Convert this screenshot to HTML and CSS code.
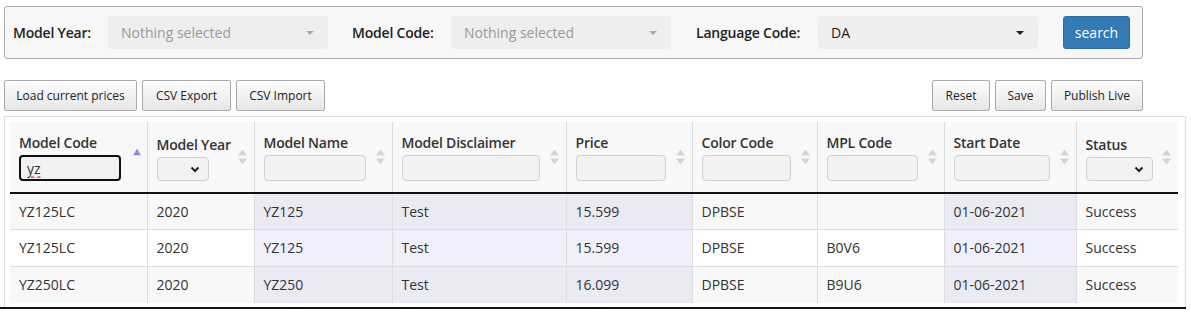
FILE: index.html
```html
<!DOCTYPE html>
<html>
<head>
<meta charset="utf-8">
<link rel="stylesheet" href="styles.css">
</head>
<body>
<div class="panel">
  <label class="lbl lbl-year">Model Year:</label>
  <div class="picker muted"><span>Nothing selected</span><i class="caret"></i></div>
  <label class="lbl lbl-code">Model Code:</label>
  <div class="picker muted"><span>Nothing selected</span><i class="caret"></i></div>
  <label class="lbl lbl-lang">Language Code:</label>
  <div class="picker"><span>DA</span><i class="caret dark"></i></div>
  <button class="btn-search">search</button>
</div>

<div class="toolbar">
  <div class="group">
    <button class="btn b-load">Load current prices</button>
    <button class="btn b-csv">CSV Export</button>
    <button class="btn b-csv">CSV Import</button>
  </div>
  <div class="group">
    <button class="btn b-reset">Reset</button>
    <button class="btn b-save">Save</button>
    <button class="btn b-pub">Publish Live</button>
  </div>
</div>

<div class="grid-wrap">
  <table class="grid">
    <thead>
      <tr>
        <th class="w1"><div class="hl">Model Code</div><input class="fi focus" value="yz"><span class="sort asc"><svg width="8" height="7" viewBox="0 0 8 7"><path d="M4 0L8 7H0Z" fill="#8b8ddc"/></svg></span></th>
        <th class="w2"><div class="hl">Model Year</div><div class="fsel fsel-year"><svg width="10" height="7" viewBox="0 0 10 7"><path d="M1.5 1.5L5 5L8.5 1.5" fill="none" stroke="#222" stroke-width="2"/></svg></div><span class="sort"><svg width="9" height="15" viewBox="0 0 9 15"><path d="M4.5 0L9 6H0Z M4.5 15L9 9H0Z" fill="#d4d4d4"/></svg></span></th>
        <th class="w3"><div class="hl">Model Name</div><input class="fi"><span class="sort"><svg width="9" height="15" viewBox="0 0 9 15"><path d="M4.5 0L9 6H0Z M4.5 15L9 9H0Z" fill="#d4d4d4"/></svg></span></th>
        <th class="w4"><div class="hl">Model Disclaimer</div><input class="fi"><span class="sort"><svg width="9" height="15" viewBox="0 0 9 15"><path d="M4.5 0L9 6H0Z M4.5 15L9 9H0Z" fill="#d4d4d4"/></svg></span></th>
        <th class="w5"><div class="hl">Price</div><input class="fi"><span class="sort"><svg width="9" height="15" viewBox="0 0 9 15"><path d="M4.5 0L9 6H0Z M4.5 15L9 9H0Z" fill="#d4d4d4"/></svg></span></th>
        <th class="w6"><div class="hl">Color Code</div><input class="fi"><span class="sort"><svg width="9" height="15" viewBox="0 0 9 15"><path d="M4.5 0L9 6H0Z M4.5 15L9 9H0Z" fill="#d4d4d4"/></svg></span></th>
        <th class="w7"><div class="hl">MPL Code</div><input class="fi"><span class="sort"><svg width="9" height="15" viewBox="0 0 9 15"><path d="M4.5 0L9 6H0Z M4.5 15L9 9H0Z" fill="#d4d4d4"/></svg></span></th>
        <th class="w8"><div class="hl">Start Date</div><input class="fi"><span class="sort"><svg width="9" height="15" viewBox="0 0 9 15"><path d="M4.5 0L9 6H0Z M4.5 15L9 9H0Z" fill="#d4d4d4"/></svg></span></th>
        <th class="w9"><div class="hl">Status</div><div class="fsel fsel-status"><svg width="10" height="7" viewBox="0 0 10 7"><path d="M1.5 1.5L5 5L8.5 1.5" fill="none" stroke="#222" stroke-width="2"/></svg></div><span class="sort"><svg width="9" height="15" viewBox="0 0 9 15"><path d="M4.5 0L9 6H0Z M4.5 15L9 9H0Z" fill="#d4d4d4"/></svg></span></th>
      </tr>
    </thead>
    <tbody>
      <tr>
        <td>YZ125LC</td><td>2020</td><td class="hi">YZ125</td><td class="hi">Test</td><td class="hi">15.599</td><td>DPBSE</td><td></td><td class="hi">01-06-2021</td><td>Success</td>
      </tr>
      <tr>
        <td>YZ125LC</td><td>2020</td><td class="hi">YZ125</td><td class="hi">Test</td><td class="hi">15.599</td><td>DPBSE</td><td>B0V6</td><td class="hi">01-06-2021</td><td>Success</td>
      </tr>
      <tr>
        <td>YZ250LC</td><td>2020</td><td class="hi">YZ250</td><td class="hi">Test</td><td class="hi">16.099</td><td>DPBSE</td><td>B9U6</td><td class="hi">01-06-2021</td><td>Success</td>
      </tr>
    </tbody>
  </table>
</div>
<div class="foot-line"></div>
</body>
</html>
```

FILE: styles.css
```css
* { box-sizing: border-box; }
html, body { margin: 0; background: #fff; }
body {
  padding: 6px 4px 0 4px;
  font-family: "Open Sans", "Noto Sans", sans-serif;
  font-size: 14px;
  color: #333;
}

.panel {
  width: 1139px;
  height: 53px;
  border: 1px solid #aaa;
  border-radius: 3px;
  background: #f7f7f7;
  display: flex;
  align-items: center;
  padding: 0 0 0 8px;
}
.lbl {
  font-weight: 600;
  font-size: 14px;
  color: #222;
  letter-spacing: -0.2px;
}
.lbl-year { width: 95px; }
.lbl-code { width: 99px; margin-left: 24px; }
.lbl-lang { width: 122px; margin-left: 25px; }
.picker {
  width: 220px;
  height: 33px;
  background: #eee;
  border-radius: 4px;
  display: flex;
  align-items: center;
  justify-content: space-between;
  padding: 0 12px 0 13px;
  font-size: 14px;
  color: #222;
}
.picker.muted { color: #9a9a9a; }
.caret {
  width: 0; height: 0;
  border-left: 4px solid transparent;
  border-right: 4px solid transparent;
  border-top: 4px solid #aaa;
  margin-right: 2px;
}
.caret.dark { border-top-color: #222; }
.btn-search {
  margin-left: 25px;
  width: 67px;
  height: 33px;
  background: #337ab7;
  border: 1px solid #2e6da4;
  border-radius: 3px;
  color: #fff;
  font-family: inherit;
  font-size: 14px;
  padding: 0;
}

.toolbar {
  width: 1139px;
  margin-top: 21px;
  display: flex;
  justify-content: space-between;
}
.group { display: flex; gap: 5px; }
.btn {
  height: 31px;
  padding: 0;
  font-family: inherit;
  font-size: 12px;
  color: #222;
  border: 1px solid #aaa;
  border-radius: 2px;
  background: linear-gradient(#fdfdfd, #e6e6e6);
}
.b-load { width: 133px; }
.b-csv { width: 89px; }
.b-reset { width: 58px; }
.b-save { width: 51px; }
.b-pub { width: 92px; }

.grid-wrap {
  width: 1182px;
  margin-top: 5px;
  border: 1px solid #ddd;
  border-bottom: none;
  padding: 5px 5px 4px 5px;
  background: #fff;
}
.grid {
  width: 1168px;
  table-layout: fixed;
  border-collapse: collapse;
}
.grid th {
  position: relative;
  background: #f8f8f8;
  text-align: left;
  vertical-align: bottom;
  padding: 11px 26px 11px 9px;
  border-left: 1px solid #ddd;
  border-bottom: 2px solid #111;
  font-weight: 600;
  font-size: 14px;
  color: #333;
  letter-spacing: -0.2px;
}
.grid th:first-child { border-left: none; }
.w1 { width: 137px; }
.w2 { width: 107px; }
.w3 { width: 138px; }
.w4 { width: 174px; }
.w5 { width: 126px; }
.w6 { width: 125px; }
.w7 { width: 127px; }
.w8 { width: 132px; }
.w9 { width: 102px; }
.hl { line-height: 19px; margin-bottom: 3px; white-space: nowrap; }
.fi {
  display: block;
  width: 100%;
  height: 26px;
  border: 1px solid #d0d0d0;
  border-radius: 4px;
  background: #f2f2f2;
  font-family: inherit;
  font-size: 14px;
  padding: 0 8px;
  color: #333;
}
.fi.focus {
  border: 2px solid #111;
  text-decoration: underline wavy #e33;
  text-underline-offset: 2px;
  padding: 0 6px;
}
.fsel {
  height: 24px;
  border: 1px solid #d0d0d0;
  border-radius: 4px;
  background: #f2f2f2;
  display: flex;
  align-items: center;
  justify-content: flex-end;
  padding-right: 8px;
}
.fsel-year { width: 52px; }
.fsel-status { width: 67px; }
.sort {
  position: absolute;
  right: 7px;
  top: 50%;
  transform: translateY(-50%);
  display: flex;
}
.sort.asc { top: 43%; right: 6px; }

.grid td {
  height: 37px;
  padding: 0 9px;
  border-left: 1px solid #ddd;
  border-top: 1px solid #ddd;
  font-size: 14px;
  color: #333;
  white-space: nowrap;
}
.grid td:first-child { border-left: none; }
.grid tbody tr:first-child td { border-top: none; height: 36px; }
.grid tbody tr:nth-child(odd) td { background: #f8f8f8; }
.grid tbody tr:nth-child(even) td { background: #fff; }
.grid tbody tr:nth-child(odd) td.hi { background: #eaeaf5; }
.grid tbody tr:nth-child(even) td.hi { background: #f0f0fc; }

.foot-line {
  margin-left: -4px;
  width: 1186px;
  height: 2px;
  background: #111;
}
```
